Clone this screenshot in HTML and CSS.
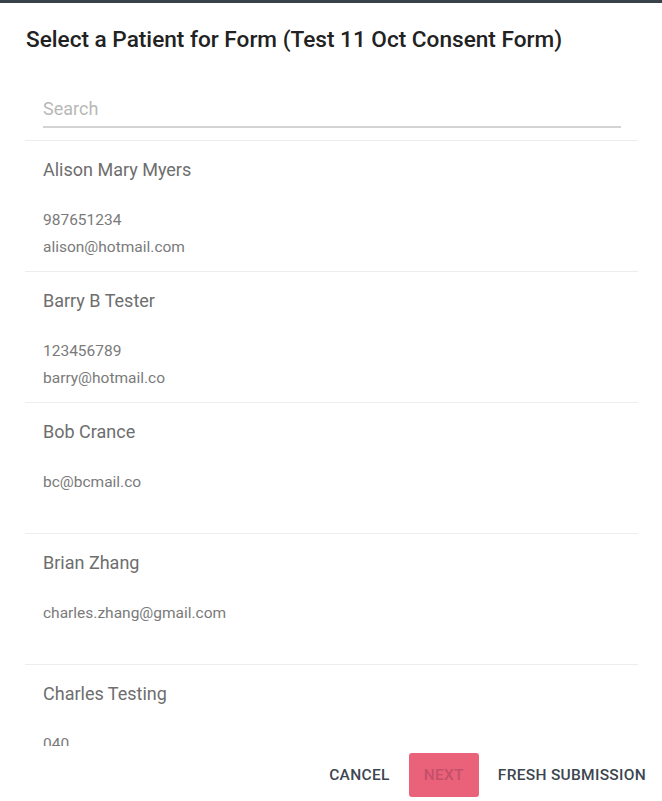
FILE: index.html
```html
<!DOCTYPE html>
<html>
  <head>
    <meta charset="UTF-8" />
    <title>Select a Patient</title>
    <link rel="stylesheet" href="styles.css">
  </head>
  <body>
    <div class="backdrop-bar"></div>
    <div class="dialog">
      <h2 class="dialog-title">Select a Patient for Form (Test 11 Oct Consent Form)</h2>

      <div class="search">
        <input type="text" class="search-input" placeholder="Search" />
      </div>

      <ul class="patient-list">
        <li class="patient">
          <div class="patient-name">Alison Mary Myers</div>
          <div class="patient-details">
            <div>987651234</div>
            <div>alison@hotmail.com</div>
          </div>
        </li>
        <li class="patient">
          <div class="patient-name">Barry B Tester</div>
          <div class="patient-details">
            <div>123456789</div>
            <div>barry@hotmail.co</div>
          </div>
        </li>
        <li class="patient">
          <div class="patient-name">Bob Crance</div>
          <div class="patient-details">
            <div>bc@bcmail.co</div>
            <div>&nbsp;</div>
          </div>
        </li>
        <li class="patient">
          <div class="patient-name">Brian Zhang</div>
          <div class="patient-details">
            <div>charles.zhang@gmail.com</div>
            <div>&nbsp;</div>
          </div>
        </li>
        <li class="patient">
          <div class="patient-name">Charles Testing</div>
          <div class="patient-details">
            <div>040</div>
            <div>&nbsp;</div>
          </div>
        </li>
      </ul>

      <div class="dialog-actions">
        <button type="button" class="btn-text">Cancel</button>
        <button type="button" class="btn-next" disabled>Next</button>
        <button type="button" class="btn-text">Fresh Submission</button>
      </div>
    </div>
  </body>
</html>
```

FILE: styles.css
```css
/* dialog for picking a patient */
body {
  margin: 0;
  font-family: Roboto, "Liberation Sans", Arial, sans-serif;
  background: #fff;
}
.backdrop-bar {
  height: 3px;
  background-color: #3a4249;
}
.dialog {
  background: #fff;
}
.dialog-title {
  margin: 25px 0 0 26px;
  font-size: 22.6px;
  line-height: 24px;
  font-weight: 500;
  color: #222;
}
.search {
  margin: 38px 41px 12px 43px;
}
.search-input {
  display: block;
  width: 100%;
  box-sizing: border-box;
  height: 38px;
  padding: 0;
  border: none;
  border-bottom: 2px solid #d4d4d4;
  font-family: inherit;
  font-size: 18px;
  color: #333;
  outline: none;
}
.search-input::placeholder {
  color: #b8b8b8;
}
.patient-list {
  list-style: none;
  margin: 0 24px 0 25px;
  padding: 0;
  height: 605px;
  overflow: hidden;
  border-top: 1px solid #ededed;
}
.patient {
  height: 131px;
  box-sizing: border-box;
  padding: 17px 18px 0;
  border-bottom: 1px solid #ededed;
}
.patient-name {
  font-size: 18px;
  line-height: 24px;
  color: #6e6e6e;
}
.patient-details {
  margin-top: 25px;
  font-size: 15.5px;
  line-height: 27px;
  color: #7a7a7a;
}
.dialog-actions {
  display: flex;
  justify-content: flex-end;
  align-items: center;
  gap: 3px;
  height: 58px;
}
.dialog-actions button {
  height: 44px;
  padding: 0 16px;
  border: none;
  border-radius: 3px;
  background: none;
  font-family: inherit;
  font-size: 15.5px;
  font-weight: 500;
  letter-spacing: 0.3px;
  text-transform: uppercase;
  cursor: pointer;
}
.btn-text {
  color: #3c4650;
}
.btn-next {
  padding: 0 15px !important;
  background-color: #ea617a !important;
  color: #c4506a;
}
```
